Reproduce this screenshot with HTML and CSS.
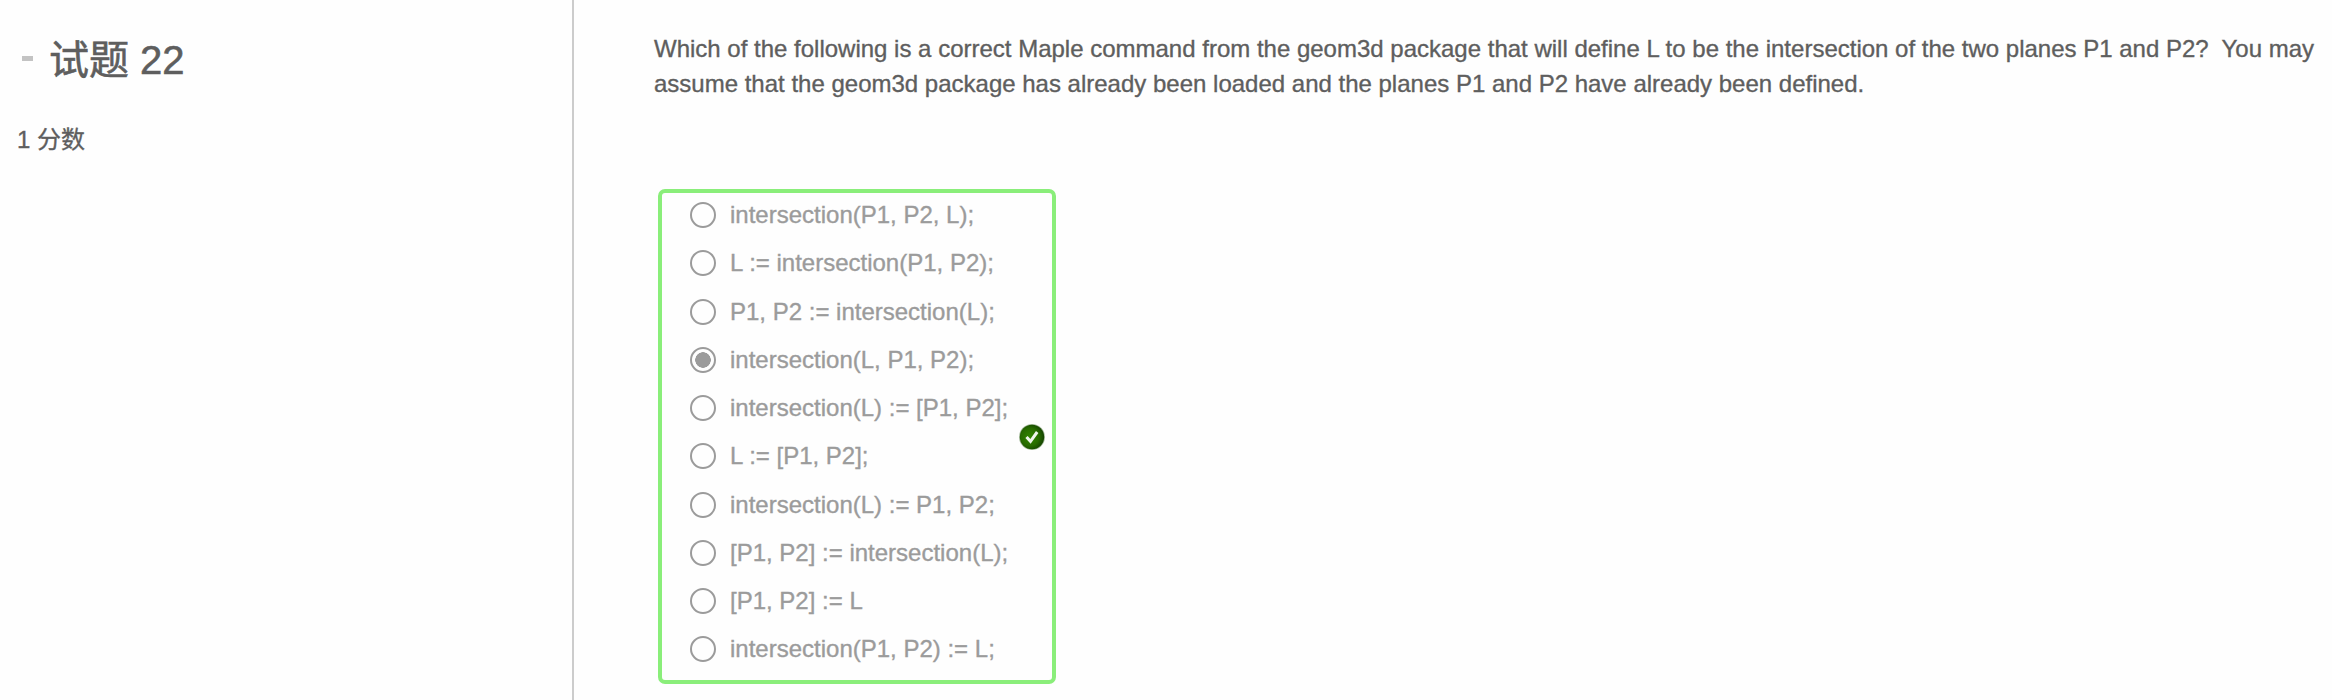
FILE: index.html
```html
<!DOCTYPE html>
<html lang="zh-CN">
<head>
<meta charset="utf-8">
<title>试题 22</title>
<link rel="stylesheet" href="styles.css">
</head>
<body>
<main class="question">
  <aside class="info">
    <h1 class="title"><span class="dash"></span><span>试题 22</span></h1>
    <p class="score">1 分数</p>
  </aside>
  <section class="content">
    <p class="prompt"><span class="line first">Which of the following is a correct Maple command from the geom3d package that will define L to be the intersection of the two planes P1 and P2?&nbsp; You may</span><span class="line">assume that the geom3d package has already been loaded and the planes P1 and P2 have already been defined.</span></p>
    <div class="answers">
      <ul class="options">
        <li class="option"><span class="radio"></span><span class="label">intersection(P1, P2, L);</span></li>
        <li class="option"><span class="radio"></span><span class="label">L := intersection(P1, P2);</span></li>
        <li class="option"><span class="radio"></span><span class="label">P1, P2 := intersection(L);</span></li>
        <li class="option"><span class="radio checked"></span><span class="label">intersection(L, P1, P2);</span></li>
        <li class="option"><span class="radio"></span><span class="label">intersection(L) := [P1, P2];</span></li>
        <li class="option"><span class="radio"></span><span class="label">L := [P1, P2];</span></li>
        <li class="option"><span class="radio"></span><span class="label">intersection(L) := P1, P2;</span></li>
        <li class="option"><span class="radio"></span><span class="label">[P1, P2] := intersection(L);</span></li>
        <li class="option"><span class="radio"></span><span class="label">[P1, P2] := L</span></li>
        <li class="option"><span class="radio"></span><span class="label">intersection(P1, P2) := L;</span></li>
      </ul>
      <svg class="correct" viewBox="0 0 28 28">
        <defs><radialGradient id="g" cx=".42" cy=".5" r=".6"><stop offset="0" stop-color="#328500"/><stop offset=".6" stop-color="#286c00"/><stop offset="1" stop-color="#123f00"/></radialGradient></defs>
        <circle cx="14" cy="14" r="13" fill="#a9bda0"/>
        <circle cx="14" cy="14" r="12.2" fill="url(#g)"/>
        <path d="M8.500 14l4 4.300 6.700-9.300" fill="none" stroke="#f0f5ed" stroke-width="3"/>
      </svg>
    </div>
  </section>
</main>
</body>
</html>
```
FILE: styles.css
```css
body {
  margin: 0;
  background: #fefefe;
  color: #5e5e5e;
  font: 24px/35px "Liberation Sans", "Noto Sans CJK SC", sans-serif;
  -webkit-text-stroke: 0.35px currentColor;
}
.question { display: flex; height: 700px; overflow: hidden; }
.info {
  box-sizing: border-box;
  width: 574px;
  flex: none;
  padding: 36px 0 0 17px;
  border-right: 2px solid #ccc;
}
.title {
  display: flex;
  align-items: center;
  gap: 16px;
  height: 48px;
  margin: 0;
  padding-left: 5px;
  font-size: 40px;
  line-height: 48px;
  font-weight: 400;
  -webkit-text-stroke-width: 0.6px;
}
.dash { width: 11px; height: 5px; margin-bottom: 3px; background: #c3c3c3; }
.score { margin: 38px 0 0; }
.content { padding: 31px 0 0 80px; white-space: nowrap; }
.prompt { margin: 0; }
.line { display: block; }
.answers {
  box-sizing: border-box;
  display: flex;
  align-items: flex-start;
  justify-content: space-between;
  width: 398px;
  height: 495px;
  margin: 88px 0 0 4px;
  padding: 0 6px 0 28px;
  border: 4px solid #8aee7a;
  border-radius: 7px;
}
.options {
  margin: -2px 0 0;
  padding: 0;
  list-style: none;
  display: grid;
  grid-template-rows: repeat(10, 48.25px);
  color: #9b9b9b;
}
.option { display: flex; align-items: center; gap: 14px; }
.label { padding-bottom: 1px; }
.radio {
  box-sizing: border-box;
  width: 26px;
  height: 26px;
  border: 2px solid #9b9b9b;
  border-radius: 50%;
}
.checked { background: radial-gradient(circle, #9b9b9b 7.500px, transparent 8px); }
.correct { width: 28px; height: 28px; flex: none; align-self: center; margin-top: 1px; }
```
